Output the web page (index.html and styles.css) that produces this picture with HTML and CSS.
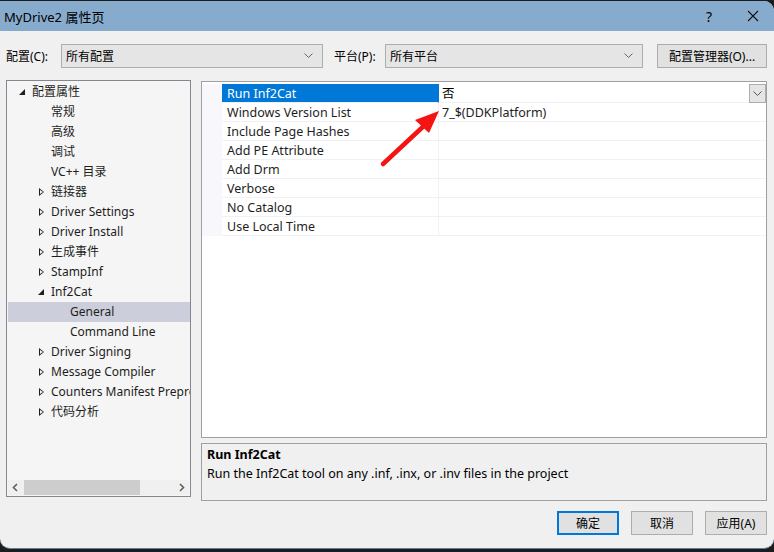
FILE: index.html
```html
<!DOCTYPE html>
<html lang="zh-CN">

<head>
    <meta charset="UTF-8">
    <title>MyDrive2 属性页</title>
    <link rel="stylesheet" href="styles.css">
</head>

<body>
    <div class="window">
        <div class="titlebar">
            <span class="title">MyDrive2 属性页</span>
            <span class="tb-btn">?</span>
            <span class="tb-btn close">
                <svg width="12" height="12" viewBox="0 0 12 12"><path d="M1 1L11 11M11 1L1 11" stroke="#111" stroke-width="1.1" fill="none"/></svg>
            </span>
        </div>

        <div class="toolbar">
            <label>配置(C):</label>
            <div class="combo combo-config">
                <span>所有配置</span>
                <svg class="chev" width="9" height="6" viewBox="0 0 9 6"><path d="M0.5 0.5L4.5 4.5L8.5 0.5" stroke="#666" fill="none"/></svg>
            </div>
            <label class="lbl-platform">平台(P):</label>
            <div class="combo combo-platform">
                <span>所有平台</span>
                <svg class="chev" width="9" height="6" viewBox="0 0 9 6"><path d="M0.5 0.5L4.5 4.5L8.5 0.5" stroke="#666" fill="none"/></svg>
            </div>
            <button class="btn btn-manager">配置管理器(O)...</button>
        </div>

        <div class="main">
            <div class="tree">
                <div class="tree-items">
                    <div class="node lvl0"><span class="tw open"></span>配置属性</div>
                    <div class="node lvl1"><span class="tw"></span>常规</div>
                    <div class="node lvl1"><span class="tw"></span>高级</div>
                    <div class="node lvl1"><span class="tw"></span>调试</div>
                    <div class="node lvl1"><span class="tw"></span>VC++ 目录</div>
                    <div class="node lvl1"><span class="tw closed"></span>链接器</div>
                    <div class="node lvl1"><span class="tw closed"></span>Driver Settings</div>
                    <div class="node lvl1"><span class="tw closed"></span>Driver Install</div>
                    <div class="node lvl1"><span class="tw closed"></span>生成事件</div>
                    <div class="node lvl1"><span class="tw closed"></span>StampInf</div>
                    <div class="node lvl1"><span class="tw open"></span>Inf2Cat</div>
                    <div class="node lvl2 selected"><span class="tw"></span>General</div>
                    <div class="node lvl2"><span class="tw"></span>Command Line</div>
                    <div class="node lvl1"><span class="tw closed"></span>Driver Signing</div>
                    <div class="node lvl1"><span class="tw closed"></span>Message Compiler</div>
                    <div class="node lvl1"><span class="tw closed"></span>Counters Manifest Preprocessor</div>
                    <div class="node lvl1"><span class="tw closed"></span>代码分析</div>
                </div>
                <div class="hscroll">
                    <svg width="16" height="15" viewBox="0 0 16 15"><path d="M9 4L5.5 7.5L9 11" stroke="#606060" stroke-width="1.6" fill="none"/></svg>
                    <div class="track"><div class="thumb"></div></div>
                    <svg width="16" height="15" viewBox="0 0 16 15"><path d="M7 4L10.5 7.5L7 11" stroke="#606060" stroke-width="1.6" fill="none"/></svg>
                </div>
            </div>

            <div class="right">
                <div class="grid">
                    <div class="row selected">
                        <div class="gutter"></div>
                        <div class="name">Run Inf2Cat</div>
                        <div class="value">否
                            <span class="drop">
                                <svg width="9" height="6" viewBox="0 0 9 6"><path d="M0.5 0.5L4.5 4.5L8.5 0.5" stroke="#555" fill="none"/></svg>
                            </span>
                        </div>
                    </div>
                    <div class="row">
                        <div class="gutter"></div>
                        <div class="name">Windows Version List</div>
                        <div class="value">7_$(DDKPlatform)</div>
                    </div>
                    <div class="row">
                        <div class="gutter"></div>
                        <div class="name">Include Page Hashes</div>
                        <div class="value"></div>
                    </div>
                    <div class="row">
                        <div class="gutter"></div>
                        <div class="name">Add PE Attribute</div>
                        <div class="value"></div>
                    </div>
                    <div class="row">
                        <div class="gutter"></div>
                        <div class="name">Add Drm</div>
                        <div class="value"></div>
                    </div>
                    <div class="row">
                        <div class="gutter"></div>
                        <div class="name">Verbose</div>
                        <div class="value"></div>
                    </div>
                    <div class="row">
                        <div class="gutter"></div>
                        <div class="name">No Catalog</div>
                        <div class="value"></div>
                    </div>
                    <div class="row">
                        <div class="gutter"></div>
                        <div class="name">Use Local Time</div>
                        <div class="value"></div>
                    </div>
                </div>
                <div class="desc">
                    <div class="desc-title">Run Inf2Cat</div>
                    <div class="desc-text">Run the Inf2Cat tool on any .inf, .inx, or .inv files in the project</div>
                </div>
            </div>

            <!-- red annotation arrow drawn on top of the grid -->
            <svg class="arrow" width="80" height="80" viewBox="0 0 80 80">
                <path d="M6 66L50 25" stroke="#f51414" stroke-width="4.5" stroke-linecap="round" fill="none"/>
                <path d="M62 13L38 22L52 35Z" fill="#f51414"/>
            </svg>
        </div>

        <div class="footer">
            <button class="btn btn-ok">确定</button>
            <button class="btn">取消</button>
            <button class="btn">应用(A)</button>
        </div>
    </div>
</body>

</html>
```

FILE: styles.css
```css
body {
    margin: 0;
    padding: 1px 0 0 0;
    width: 774px;
    height: 551px;
    background-color: #1c1c1c;
    font-family: "Noto Sans", "Noto Sans CJK SC", sans-serif;
    font-size: 12px;
    color: #000;
    overflow: hidden;
}

.window {
    position: relative;
    width: 774px;
    height: 547px;
    background-color: #f0f0f0;
    border-radius: 0 10px 10px 10px;
    border-bottom: 1px solid #5a7fa8;
    overflow: hidden;
}

.titlebar {
    height: 30px;
    background-color: #87abcd;
    display: flex;
    align-items: center;
    padding-left: 4px;
    font-size: 13px;
}

.title {
    flex: 1;
}

.tb-btn {
    width: 46px;
    text-align: center;
    font-size: 14px;
}

.tb-btn.close {
    display: flex;
    justify-content: center;
    width: 42px;
}

.toolbar {
    display: flex;
    align-items: center;
    height: 24px;
    margin-top: 13px;
    padding-left: 6px;
}

.toolbar label {
    width: 55px;
    flex: none;
}

.combo {
    height: 24px;
    border: 1px solid #adadad;
    background-color: #e5e5e5;
    display: flex;
    align-items: center;
    padding: 0 9px 0 4px;
    box-sizing: border-box;
    flex: none;
}

.combo span {
    flex: 1;
}

.combo-config {
    width: 262px;
}

.toolbar .lbl-platform {
    margin-left: 11px;
    width: 51px;
}

.combo-platform {
    width: 258px;
}

.btn {
    font-family: inherit;
    font-size: 12px;
    height: 24px;
    width: 62px;
    border: 1px solid #adadad;
    background-color: #e1e1e1;
    color: #000;
    padding: 0;
    box-sizing: border-box;
    flex: none;
}

.btn-manager {
    width: 110px;
    margin-left: 14px;
}

.main {
    position: relative;
    display: flex;
    margin-top: 12px;
    padding-left: 6px;
}

.tree {
    width: 183px;
    height: 415px;
    border: 1px solid #828790;
    background-color: #f5f5f5;
    display: flex;
    flex-direction: column;
}

.tree-items {
    flex: 1;
    overflow: hidden;
    white-space: nowrap;
    padding-top: 1px;
}

.node {
    height: 20px;
    line-height: 20px;
    display: flex;
    align-items: center;
    color: #1e1e1e;
}

.node.selected {
    background-color: #cccedb;
    margin-left: 1px;
}

.lvl0 { padding-left: 9px; }
.lvl1 { padding-left: 28px; }
.lvl2 { padding-left: 47px; }
.node.lvl2.selected { padding-left: 46px; }

.tw {
    width: 16px;
    height: 20px;
    position: relative;
    flex: none;
}

.tw.open::after {
    content: "";
    position: absolute;
    left: 3px;
    top: 7px;
    border-style: solid;
    border-width: 0 0 6px 6px;
    border-color: transparent transparent #1e1e1e transparent;
}

.tw.closed::after {
    content: "";
    position: absolute;
    left: 4px;
    top: 6px;
    width: 0;
    height: 0;
    border-style: solid;
    border-width: 4px 0 4px 5px;
    border-color: transparent transparent transparent #1e1e1e;
}

.tw.closed::before {
    content: "";
    position: absolute;
    left: 5px;
    top: 8px;
    border-style: solid;
    border-width: 2.5px 0 2.5px 3px;
    border-color: transparent transparent transparent #f5f5f5;
    z-index: 1;
}

.hscroll {
    height: 15px;
    margin: 0 1px 1px 1px;
    display: flex;
    align-items: center;
    background-color: #f0f0f0;
}

.track {
    flex: 1;
    height: 15px;
}

.thumb {
    width: 116px;
    height: 15px;
    background-color: #cdcdcd;
}

.right {
    margin-left: 10px;
    width: 566px;
    display: flex;
    flex-direction: column;
}

.grid {
    height: 353px;
    margin-top: 1px;
    border: 1px solid #a0a0a0;
    background-color: #fff;
    padding-top: 2px;
    font-size: 12.5px;
}

.row {
    display: flex;
    height: 19px;
}

.gutter {
    width: 20px;
    background-color: #f7f7fc;
}

.name {
    width: 211px;
    padding-left: 5px;
    line-height: 19px;
    border-bottom: 1px solid #f0f0f5;
    border-right: 1px solid #f0f0f5;
    color: #1e1e1e;
}

.value {
    flex: 1;
    padding-left: 3px;
    line-height: 19px;
    border-bottom: 1px solid #f0f0f5;
    position: relative;
    color: #1e1e1e;
}

.row.selected .name {
    background-color: #0078d7;
    color: #fff;
    border-right-color: #0078d7;
}

.row.selected .value {
    color: #000;
}

.drop {
    position: absolute;
    right: 0;
    top: 0;
    width: 15px;
    height: 17px;
    border: 1px solid #adadad;
    background-color: #e5e5e5;
    display: flex;
    align-items: center;
    justify-content: center;
}

.desc {
    margin-top: 5px;
    border: 1px solid #a0a0a0;
    padding: 1px 0 0 5px;
    box-sizing: border-box;
    height: 58px;
    font-size: 12.5px;
}

.desc-title {
    font-weight: bold;
    line-height: 18px;
    margin-top: 1px;
}

.desc-text {
    line-height: 19px;
}

.arrow {
    position: absolute;
    left: 377px;
    top: 18px;
}

.footer {
    display: flex;
    justify-content: flex-end;
    gap: 12px;
    padding-right: 7px;
    margin-top: 10px;
}

.btn-ok {
    border: 2px solid #0078d7;
}
```
